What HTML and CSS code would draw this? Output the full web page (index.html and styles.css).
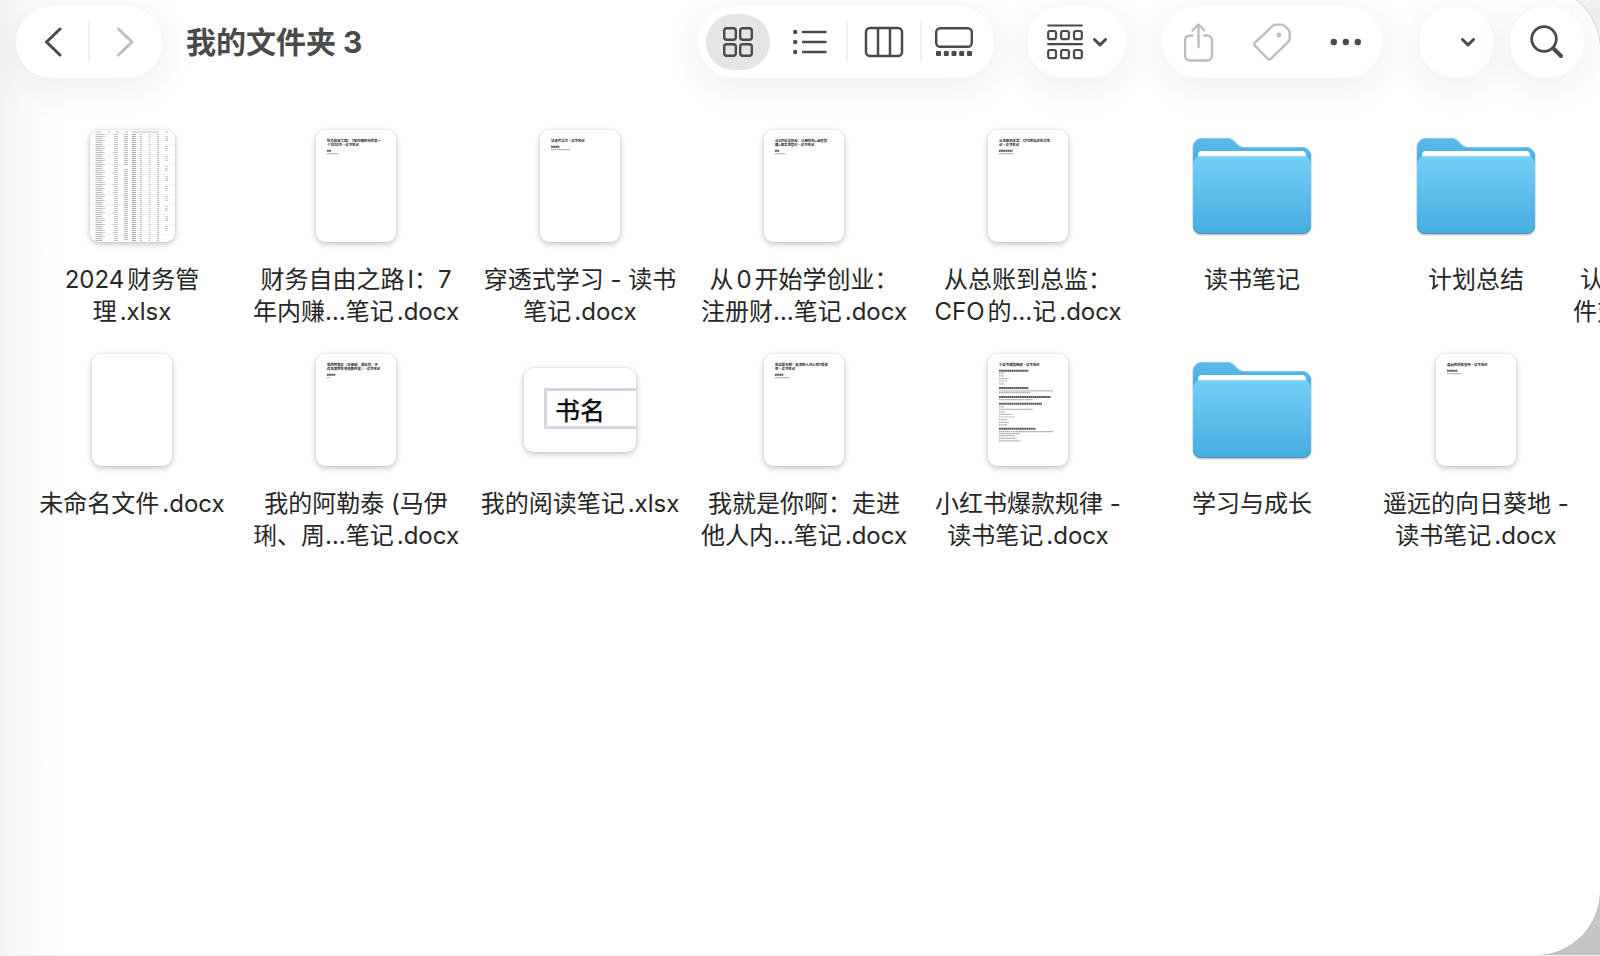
FILE: index.html
```html
<!DOCTYPE html>
<html lang="zh-CN">
<head>
<meta charset="utf-8">
<title>我的文件夹 3</title>
<link rel="stylesheet" href="styles.css">
</head>
<body>
<svg class="defs" aria-hidden="true">
  <defs>
    <linearGradient id="back" x1="0" y1="0" x2="0" y2="1"><stop offset="0" stop-color="#5bbbe9"/><stop offset=".5" stop-color="#3ba4da"/></linearGradient>
    <linearGradient id="front" x1="0" y1="0" x2="0" y2="1"><stop offset="0" stop-color="#73cff8"/><stop offset="1" stop-color="#46ade1"/></linearGradient>
    <symbol id="folder" viewBox="0 0 128 128">
      <path d="M5 25a9 9 0 0 1 9-9h25c3 0 5 1 7 3l3 3c2 2 4 3 6 3h59a9 9 0 0 1 9 9v60H5z" fill="url(#back)"/>
      <path d="M14 16.500h25c3 0 5 1 7 3l3 3c2 2 4 3 6 3h59" fill="none" stroke="#7accef" stroke-width="1"/>
      <path d="M10 39v-6a4 4 0 0 1 4-4h100a4 4 0 0 1 4 4v6z" fill="#fff"/>
      <path d="M5 41a8 8 0 0 1 8-7h102a8 8 0 0 1 8 7v63a8 8 0 0 1-8 8H13a8 8 0 0 1-8-8z" fill="url(#front)"/>
      <path d="M9 35.500q2-1 4-1h102q2 0 4 1" fill="none" stroke="#8bdafb" stroke-width="1"/>
      <path d="M6 105a7 7 0 0 0 7 6.500h102a7 7 0 0 0 7-6.500" fill="none" stroke="#3b96c6" stroke-width="1"/>
    </symbol>
    <symbol id="down" viewBox="0 0 14 10"><path d="M1.500 2.500 7 8 12.500 2.500" fill="none" stroke="#4a4a4a" stroke-width="3" stroke-linecap="round" stroke-linejoin="round"/></symbol>
  </defs>
</svg>
<main class="window">
  <header class="toolbar">
    <nav class="pill nav" aria-label="导航">
      <button class="tool" type="button" aria-label="返回"><svg width="20" height="32" viewBox="0 0 20 32" fill="none" stroke="#4a4a4a" stroke-width="3" stroke-linecap="round" stroke-linejoin="round"><path d="M18 3 4.500 16 18 29"/></svg></button>
      <span class="divider"></span>
      <button class="tool" type="button" aria-label="前进"><svg width="20" height="32" viewBox="0 0 20 32" fill="none" stroke="#bdbdbd" stroke-width="3" stroke-linecap="round" stroke-linejoin="round"><path d="M2.500 3 16 16 2.500 29"/></svg></button>
    </nav>
    <h1 class="title">我的文件夹 3</h1>
    <div class="pill views" role="group" aria-label="显示方式">
      <button class="tool edge selected" type="button" aria-label="图标"><svg width="30" height="30" viewBox="0 0 30 30" fill="none" stroke="#4a4a4a" stroke-width="2.400"><rect x="1.200" y="1.200" width="11.600" height="11.600" rx="2.500"/><rect x="17.200" y="1.200" width="11.600" height="11.600" rx="2.500"/><rect x="1.200" y="17.200" width="11.600" height="11.600" rx="2.500"/><rect x="17.200" y="17.200" width="11.600" height="11.600" rx="2.500"/></svg></button>
      <button class="tool list" type="button" aria-label="列表"><svg width="34" height="26" viewBox="0 0 34 26" fill="#4a4a4a"><circle cx="2.200" cy="3" r="2.200"/><circle cx="2.200" cy="13" r="2.200"/><circle cx="2.200" cy="23" r="2.200"/><path d="M10 3h22.500M10 13h22.500M10 23h22.500" stroke="#4a4a4a" stroke-width="2.400" stroke-linecap="round"/></svg></button>
      <span class="divider"></span>
      <button class="tool" type="button" aria-label="分栏"><svg width="40" height="32" viewBox="0 0 40 32" fill="none" stroke="#4a4a4a" stroke-width="2.500"><rect x="2" y="2" width="36" height="28" rx="4"/><path d="M14 2v28M26 2v28"/></svg></button>
      <span class="divider"></span>
      <button class="tool edge" type="button" aria-label="画廊"><svg width="38" height="30" viewBox="0 0 38 30"><rect x="1.200" y="1.200" width="35.600" height="18.600" rx="4" fill="none" stroke="#4a4a4a" stroke-width="2.400"/><g fill="#4a4a4a"><rect x="1" y="24" width="5" height="5" rx="1"/><rect x="8.800" y="24" width="5" height="5" rx="1"/><rect x="16.500" y="24" width="5" height="5" rx="1"/><rect x="24.200" y="24" width="5" height="5" rx="1"/><rect x="32" y="24" width="5" height="5" rx="1"/></g></svg></button>
    </div>
    <button class="pill group" type="button" aria-label="分组"><svg width="36" height="36" viewBox="0 0 36 36" fill="none" stroke="#4a4a4a" stroke-width="2.200" stroke-linecap="round"><path d="M1.200 1.500h33.600M1.200 20.200h33.600"/><rect x="1.200" y="7" width="7.800" height="8.200" rx="2"/><rect x="14.100" y="7" width="7.800" height="8.200" rx="2"/><rect x="27" y="7" width="7.800" height="8.200" rx="2"/><rect x="1.200" y="26" width="7.800" height="8.200" rx="2"/><rect x="14.100" y="26" width="7.800" height="8.200" rx="2"/><rect x="27" y="26" width="7.800" height="8.200" rx="2"/></svg><svg width="14" height="10"><use href="#down"/></svg></button>
    <div class="pill actions">
      <button class="tool" type="button" aria-label="共享"><svg width="30" height="40" viewBox="0 0 30 40" fill="none" stroke="#bdbdbd" stroke-width="2.400" stroke-linecap="round" stroke-linejoin="round"><path d="M14.500 25V3M8.500 8.500l6-6 6 6"/><path d="M9.500 13.500H6a5 5 0 0 0-5 5V33.500a5 5 0 0 0 5 5h17a5 5 0 0 0 5-5V18.500a5 5 0 0 0-5-5H19.500" stroke-linecap="butt"/></svg></button>
      <button class="tool" type="button" aria-label="标签"><svg width="38" height="38" viewBox="0 0 38 38" fill="none" stroke="#bdbdbd" stroke-width="2.400" stroke-linejoin="round"><path d="M2.300 19.400 20 2.600q1-1 2.500-1h6q1.800 0 3 1.200l4 4q1.200 1.200 1.200 3v6q0 1.500-1 2.500L18 35.700q-1.700 1.600-3.400 0L2.300 23.200q-2-2 0-3.800z"/><circle cx="26" cy="12" r="2.400" fill="#bdbdbd" stroke="none"/></svg></button>
      <button class="tool" type="button" aria-label="更多"><svg width="32" height="8" viewBox="0 0 32 8" fill="#4a4a4a"><circle cx="4.800" cy="4" r="3.200"/><circle cx="16.800" cy="4" r="3.200"/><circle cx="28.800" cy="4" r="3.200"/></svg></button>
    </div>
    <button class="pill more" type="button" aria-label="更多选项"><svg width="14" height="10"><use href="#down"/></svg></button>
    <button class="pill search" type="button" aria-label="搜索"><svg width="34" height="34" viewBox="0 0 34 34" fill="none" stroke="#4a4a4a" stroke-linecap="round"><circle cx="14" cy="14" r="12.300" stroke-width="2.700"/><path d="M23.500 23.500l7.500 7.500" stroke-width="4"/></svg></button>
  </header>

  <ul class="files">
    <li class="file">
      <div class="thumb"><svg class="paper sheet" viewBox="0 0 85 112">
        <path d="M0 4.500h85M0 14.500h85M0 24.500h85M0 34.500h85M0 44.500h85M0 54.500h85M0 64.500h85M0 74.500h85M0 84.500h85M0 94.500h85M0 104.500h85" stroke="#f5f5f5"/>
        <path d="M6 2h5M18 2h2M26 2h3M35 2h3M42 2h27M75 2h3" stroke="#bbb"/>
        <g fill="none" stroke-dasharray="1 1" opacity=".75">
          <path d="M9 4v107" stroke="#a6a6a6" stroke-width="7"/>
          <path d="M13.500 4v107" stroke="#bbb" stroke-width="3" stroke-dasharray="1 1 1 3 1 5"/>
          <path d="M26 4v107" stroke="#b0b0b0" stroke-width="4"/>
          <path d="M23.500 22v88" stroke="#ccc" stroke-width="3" stroke-dasharray="1 11 1 7"/>
          <path d="M36 4v31M36 39v71" stroke="#a2a2a2" stroke-width="4"/>
          <path d="M44 4v107" stroke="#8c8c8c" stroke-width="4"/>
          <path d="M51 4v107M68 4v107" stroke="#aaa" stroke-width="2"/>
          <path d="M59.500 4v107" stroke="#b5b5b5" stroke-width="2"/>
          <path d="M76.500 6v98" stroke="#999" stroke-width="2" stroke-dasharray="1 1 1 1 1 5"/>
        </g></svg></div>
      <p class="name">2024财务管<br>理.xlsx</p>
    </li>
    <li class="file">
      <div class="thumb"><svg class="paper doc" viewBox="0 0 800 1120"><g class="mini"><text x="110" y="118">财务自由之路I：7年内赚到你的第一</text><text x="110" y="156">个1000万 - 读书笔记</text></g><path class="head" d="M110 208h42"/><path class="line" d="M110 236h116"/></svg></div>
      <p class="name">财务自由之路I：7<br>年内赚…笔记.docx</p>
    </li>
    <li class="file">
      <div class="thumb"><svg class="paper doc" viewBox="0 0 800 1120"><g class="mini"><text x="110" y="118">穿透式学习 - 读书笔记</text></g><path class="head" d="M110 168h86"/><path class="line" d="M110 196h190"/></svg></div>
      <p class="name">穿透式学习 - 读书<br>笔记.docx</p>
    </li>
    <li class="file">
      <div class="thumb"><svg class="paper doc" viewBox="0 0 800 1120"><g class="mini"><text x="110" y="118">从0开始学创业：注册财税+运营管</text><text x="110" y="156">理+现金流管控 - 读书笔记</text></g><path class="head" d="M110 208h42"/><path class="line" d="M110 236h104"/></svg></div>
      <p class="name">从0开始学创业：<br>注册财…笔记.docx</p>
    </li>
    <li class="file">
      <div class="thumb"><svg class="paper doc" viewBox="0 0 800 1120"><g class="mini"><text x="110" y="118">从总账到总监：CFO的私家财务笔</text><text x="110" y="156">记 - 读书笔记</text></g><path class="head" d="M110 208h136"/><path class="line" d="M110 236h144"/></svg></div>
      <p class="name">从总账到总监：<br>CFO的…记.docx</p>
    </li>
    <li class="file">
      <div class="thumb"><svg class="folder"><use href="#folder"/></svg></div>
      <p class="name">读书笔记</p>
    </li>
    <li class="file">
      <div class="thumb"><svg class="folder"><use href="#folder"/></svg></div>
      <p class="name">计划总结</p>
    </li>
    <li class="file">
      <div class="thumb"><svg class="paper doc" viewBox="0 0 800 1120"></svg></div>
      <p class="name">认知驱动与思维升级文<br>件对比整理笔…记.docx</p>
    </li>
    <li class="file">
      <div class="thumb"><svg class="paper doc" viewBox="0 0 800 1120"></svg></div>
      <p class="name">未命名文件.docx</p>
    </li>
    <li class="file">
      <div class="thumb"><svg class="paper doc" viewBox="0 0 800 1120"><g class="mini"><text x="110" y="118">我的阿勒泰（马伊琍、周依然、于</text><text x="110" y="156">适主演同名电视剧原著）- 读书笔记</text></g><path class="head" d="M110 208h86"/><path class="line" d="M110 236h30"/></svg></div>
      <p class="name">我的阿勒泰 (马伊<br>琍、周…笔记.docx</p>
    </li>
    <li class="file">
      <div class="thumb"><div class="paper wide"><span class="cell">书名</span></div></div>
      <p class="name">我的阅读笔记.xlsx</p>
    </li>
    <li class="file">
      <div class="thumb"><svg class="paper doc" viewBox="0 0 800 1120"><g class="mini"><text x="110" y="118">我就是你啊：走进他人内心的7项修</text><text x="110" y="156">炼 - 读书笔记</text></g><path class="head" d="M110 208h86"/><path class="line" d="M110 236h146"/></svg></div>
      <p class="name">我就是你啊：走进<br>他人内…笔记.docx</p>
    </li>
    <li class="file">
      <div class="thumb"><svg class="paper doc" viewBox="0 0 800 1120"><g class="mini"><text x="110" y="118">小红书爆款规律 - 读书笔记</text></g>
        <path class="head" d="M110 168h296M110 340h296M110 430h516M110 498h430M110 748h366"/>
        <path class="line" d="M110 194h50M110 218h50M110 246h100M110 270h80M110 298h50M110 368h540M110 386h310M110 456h340M110 528h50M110 554h340M110 578h60M110 604h126M110 630h160M110 656h80M110 684h100M110 708h80M110 776h540M110 796h206M110 816h160M110 844h176M110 868h216"/></svg></div>
      <p class="name">小红书爆款规律 -<br>读书笔记.docx</p>
    </li>
    <li class="file">
      <div class="thumb"><svg class="folder"><use href="#folder"/></svg></div>
      <p class="name">学习与成长</p>
    </li>
    <li class="file">
      <div class="thumb"><svg class="paper doc" viewBox="0 0 800 1120"><g class="mini"><text x="110" y="118">遥远的向日葵地 - 读书笔记</text></g><path class="head" d="M110 168h106"/><path class="line" d="M110 196h144"/></svg></div>
      <p class="name">遥远的向日葵地 -<br>读书笔记.docx</p>
    </li>
  </ul>
</main>
</body>
</html>
```
FILE: styles.css
```css
* { box-sizing: border-box; }
body {
  margin: 0;
  overflow: hidden;
  background: linear-gradient(#efefef, #c4c4c4);
  font-family: Inter, "Noto Sans CJK SC", sans-serif;
  color: #262626;
}
.defs { position: absolute; width: 0; height: 0; }

.window {
  min-height: calc(100vh + 13px);
  margin-top: -14px;
  padding-top: 20px;
  overflow: hidden;
  background: linear-gradient(90deg, #f1f1f1, #f9f9f9 20px, #fdfdfd 44px, #fff 70px);
  border-radius: 0 64px 64px 0;
  box-shadow: 0 0 1px 0 #6c6c6c;
}

.toolbar { display: flex; align-items: center; padding: 0 16px; }
.pill {
  display: flex;
  align-items: center;
  height: 72px;
  padding: 0;
  border: 0;
  border-radius: 36px;
  background: #fff;
  box-shadow: 0 8px 40px rgba(0, 0, 0, .08);
}
.tool {
  display: flex;
  flex: 1;
  align-items: center;
  justify-content: center;
  height: 56px;
  padding: 0;
  border: 0;
  border-radius: 28px;
  background: none;
}
.divider { width: 2px; height: 40px; background: #f0f0f0; }
.nav { width: 146px; }
.title { margin: 0 auto 0 24px; font-size: 30px; line-height: 40px; font-weight: 700; color: #4a4a4a; }
.views { width: 296px; padding: 0 8px; }
.edge { flex: 0 0 64px; }
.selected { background: #e5e5e5; }
.list { margin-left: 4px; }
.group { justify-content: center; gap: 10px; width: 99px; margin-left: 33px; }
.actions { width: 220px; margin-left: 36px; }
.more { justify-content: flex-end; width: 75px; margin-left: 37px; padding-right: 19px; }
.search { justify-content: center; width: 74px; margin-left: 16px; }

.files {
  display: grid;
  grid-template-columns: repeat(8, 224px);
  grid-auto-rows: 224px;
  margin: 0;
  padding: 44px 0 0 20px;
  list-style: none;
}
.file { display: flex; flex-direction: column; align-items: center; gap: 14px; min-width: 0; }
.thumb { display: flex; align-items: center; justify-content: center; width: 128px; height: 128px; }
.name { margin: 0; font-size: 24px; line-height: 32px; text-align: center; white-space: nowrap; text-autospace: normal; }

.paper { background: #fff; border-radius: 9px; box-shadow: 0 2px 6px rgba(0, 0, 0, .24), 0 0 2px rgba(0, 0, 0, .12); }
.doc { width: 80px; height: 112px; }
.sheet { width: 85px; height: 112px; }
.wide { display: flex; align-items: flex-start; width: 112px; height: 84px; padding: 20px 0 0 20px; overflow: hidden; }
.cell {
  flex: 1;
  height: 41px;
  padding-left: 8px;
  border: 3px solid #d6d6e6;
  border-right: 0;
  font-family: "Noto Sans CJK SC", sans-serif;
  font-size: 25px;
  font-weight: 500;
  line-height: 36px;
  color: #111;
}
.folder { width: 128px; height: 128px; filter: drop-shadow(0 1px 1px rgba(0, 0, 0, .3)); }
.mini { font-size: 34px; font-weight: 700; fill: #222; }
.head { fill: none; stroke: #555; stroke-width: 20; stroke-dasharray: 18 3; }
.line { fill: none; stroke: #aaa; stroke-width: 12; stroke-dasharray: 11 3; }
```
